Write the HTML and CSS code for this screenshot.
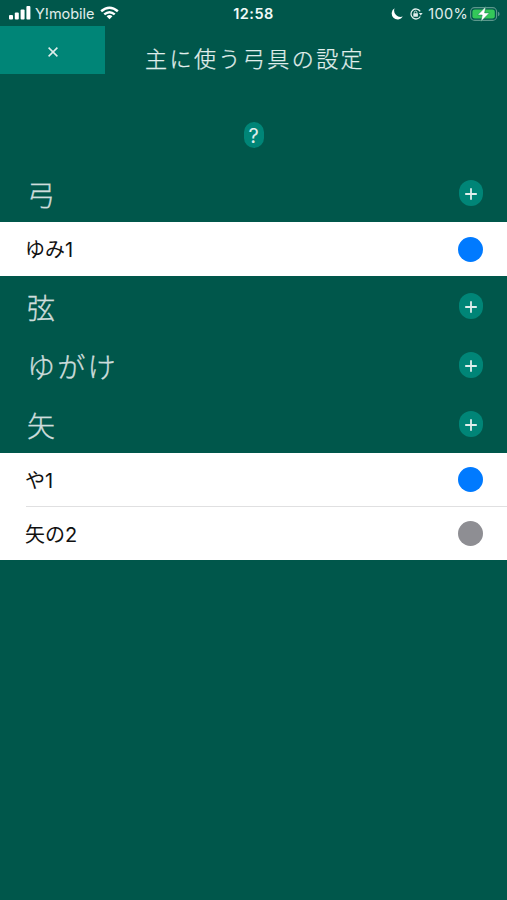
FILE: index.html
```html
<!DOCTYPE html>
<html lang="ja">
<head>
<meta charset="utf-8">
<title>主に使う弓具の設定</title>
<link rel="stylesheet" href="styles.css">
</head>
<body>
<div class="status">
  <div class="status-left">
    <svg class="signal" width="22" height="14" viewBox="0 0 22 14" fill="currentColor"><rect x="0" y="9" width="4" height="4.5" rx="1"/><rect x="5.8" y="6.5" width="4" height="7" rx="1"/><rect x="11.6" y="3.5" width="4" height="10" rx="1"/><rect x="17.4" y="0" width="4" height="13.5" rx="1"/></svg>
    <span class="carrier">Y!mobile</span>
    <svg class="wifi" width="19" height="14" viewBox="0 0 20 14"><g fill="none" stroke="currentColor" stroke-width="2.6"><path d="M1.2 5.2Q10 -2.4 18.8 5.2"/><path d="M4.5 8.5Q10 3.8 15.5 8.5"/></g><path d="M6.9 10.4Q10 8 13.1 10.4L10 13.7Z" fill="currentColor"/></svg>
  </div>
  <div class="clock">12:58</div>
  <div class="status-right">
    <svg class="moon" width="12" height="12" viewBox="0 0 12 12"><path d="M3.6.3A6 6 0 1 0 11.8 8.6A6.4 6.4 0 0 1 3.6.3Z" fill="currentColor"/></svg>
    <svg class="lock" width="14" height="12" viewBox="0 0 14 12"><path d="M11.3 8.5A5 5 0 1 1 11.2 3.3" fill="none" stroke="currentColor" stroke-width="1.3"/><path d="M9.8 5H13.6L11.8 7.6Z" fill="currentColor"/><rect x="4.3" y="5.3" width="4.6" height="3.4" rx=".5" fill="currentColor"/><path d="M5.3 5.5V4.4a1.3 1.3 0 0 1 2.6 0V5.5" fill="none" stroke="currentColor" stroke-width=".9"/></svg>
    <span class="percent">100%</span>
    <svg class="battery" width="30" height="16" viewBox="0 0 30 16"><rect x=".6" y="1.6" width="26" height="12.8" rx="4" fill="none" stroke="#5c978c" stroke-width="1.1"/><rect x="2.4" y="3.4" width="22.4" height="9.2" rx="2.4" fill="#34c759"/><path d="M28 5.7Q29.6 6.3 29.6 8T28 10.3Z" fill="#5c978c"/><path d="M15.8 .6L7.6 9H12.2L10.9 15.6L19.4 6.9H14.6Z" fill="#fff" stroke="#0b7a50" stroke-width=".5"/></svg>
  </div>
</div>
<header class="header">
  <button class="close" aria-label="閉じる"><svg width="10" height="10" viewBox="0 0 10 10"><path d="M.6.6L9.4 9.4M9.4.6L.6 9.4" stroke="currentColor" stroke-width="1.5"/></svg></button>
  <h1 class="title">主に使う弓具の設定</h1>
</header>
<div class="help-row"><button class="help">?</button></div>
<main>
  <section>
    <div class="heading"><h2>弓</h2><button class="add"><svg width="12" height="12" viewBox="0 0 12 12"><path d="M6 .2V11.8M.2 6H11.8" stroke="currentColor" stroke-width="1.8"/></svg></button></div>
    <ul class="items"><li><span>ゆみ1</span><i class="dot active"></i></li></ul>
  </section>
  <section>
    <div class="heading"><h2>弦</h2><button class="add"><svg width="12" height="12" viewBox="0 0 12 12"><path d="M6 .2V11.8M.2 6H11.8" stroke="currentColor" stroke-width="1.8"/></svg></button></div>
  </section>
  <section>
    <div class="heading"><h2>ゆがけ</h2><button class="add"><svg width="12" height="12" viewBox="0 0 12 12"><path d="M6 .2V11.8M.2 6H11.8" stroke="currentColor" stroke-width="1.8"/></svg></button></div>
  </section>
  <section>
    <div class="heading"><h2>矢</h2><button class="add"><svg width="12" height="12" viewBox="0 0 12 12"><path d="M6 .2V11.8M.2 6H11.8" stroke="currentColor" stroke-width="1.8"/></svg></button></div>
    <ul class="items"><li><span>や1</span><i class="dot active"></i></li><li><span>矢の2</span><i class="dot"></i></li></ul>
  </section>
</main>
</body>
</html>
```
FILE: styles.css
```css
* { box-sizing: border-box; }
body {
  margin: 0;
  min-height: 900px;
  background: #00574b;
  color: #e0eeec;
  font-family: Inter, "Noto Sans CJK JP", sans-serif;
}
button { border: 0; padding: 0; color: inherit; font: inherit; background: #008577; display: flex; align-items: center; justify-content: center; }
h1, h2, ul { margin: 0; padding: 0; font-weight: 300; }
svg { display: block; flex: none; }
.status { height: 26px; display: grid; grid-template-columns: 1fr auto 1fr; align-items: center; padding: 1px 7px 0 9px; line-height: 24px; }
.status-left, .status-right { display: flex; align-items: center; }
.status-right { justify-content: flex-end; }
.carrier { font-size: 14.5px; margin: 0 6px 0 4px; letter-spacing: -.05px; }
.signal, .wifi, .moon { color: #fff; }
.signal, .wifi { margin-top: -1px; }
.clock { font-size: 14.5px; font-weight: 600; letter-spacing: .45px; margin-left: -2px; color: #f2faf8; }
.lock { margin: 0 5px 0 7px; }
.moon { margin-right: -1px; }
.percent { font-size: 14.5px; letter-spacing: .3px; margin-right: 2px; }
.header { height: 84px; display: grid; grid-template-columns: 105px 1fr; align-items: start; }
.close { height: 48px; padding-top: 3px; }
.title { font-size: 22px; line-height: 32px; letter-spacing: 2.45px; padding: 15px 0 0 40px; white-space: nowrap; font-family: "Noto Sans CJK JP", sans-serif; -webkit-text-stroke: .25px currentColor; }
.help-row { height: 54px; display: flex; justify-content: center; padding-top: 12px; }
.help { width: 20px; height: 26px; border-radius: 10px; font-size: 20px; padding-top: 1px; }
.heading { height: 59px; display: flex; align-items: center; justify-content: space-between; padding: 3px 24px 0 27px; }
section:first-child .heading { height: 58px; padding-top: 1px; }
.heading h2 { font: 300 28px/40px "Noto Sans CJK JP", sans-serif; letter-spacing: 2.3px; color: #cfdddc; -webkit-text-stroke: .35px currentColor; }
.add { width: 24px; height: 26px; border-radius: 12px; padding-top: 2px; margin-bottom: 2px; }
.items { list-style: none; background: #fff; color: #111; font-weight: 400; }
.items li { height: 54px; display: flex; align-items: center; justify-content: space-between; margin-left: 26px; padding-right: 24px; font-size: 20px; line-height: 30px; }
.items li:not(:only-child):first-child { height: 53px; }
.items li + li { height: 54px; border-top: 1px solid #e0e0e1; }
.items span { padding-top: 2px; margin-left: -1px; }
.dot { width: 25px; height: 25px; border-radius: 50%; background: #8e8e93; }
.dot.active { background: #007aff; }
```
